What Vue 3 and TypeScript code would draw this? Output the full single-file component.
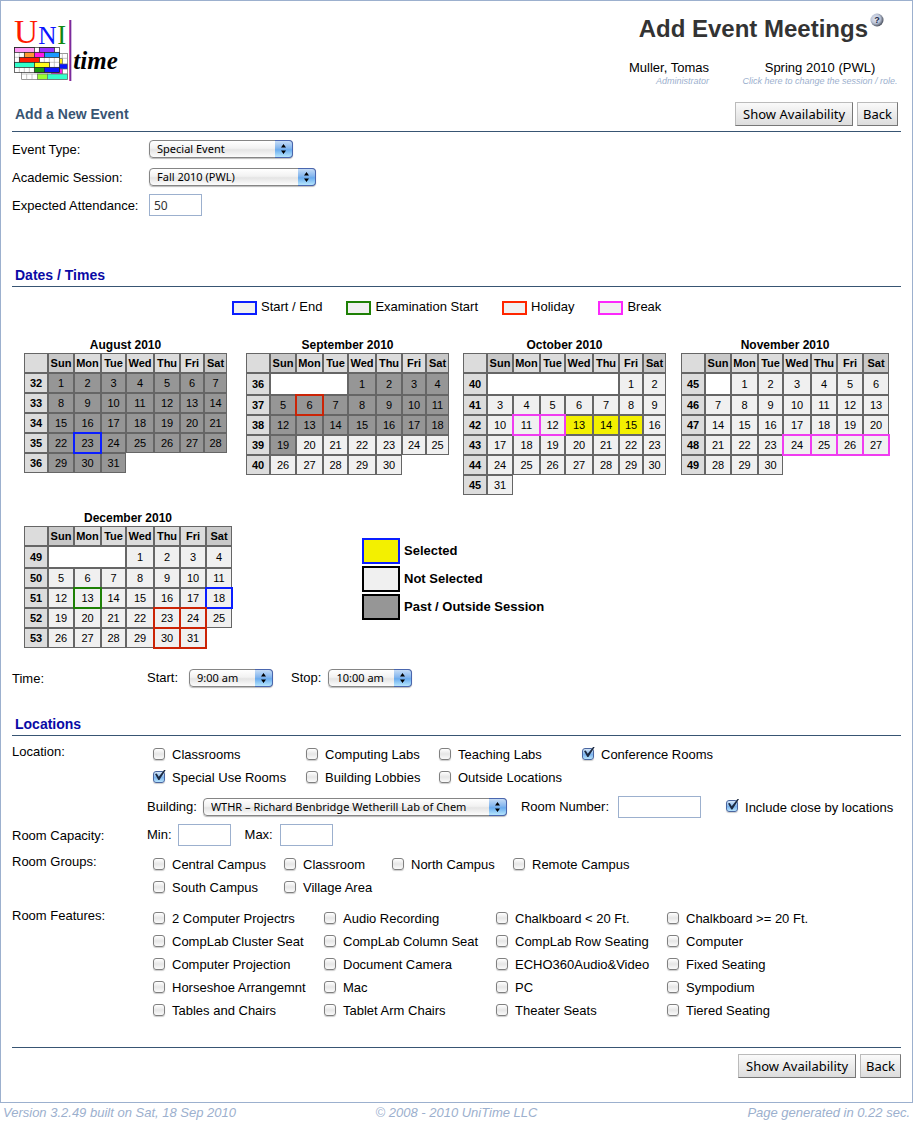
<script setup lang="ts">
import { ref } from 'vue'

type Mark = 'edge' | 'exam' | 'holiday' | 'break'

interface Month {
  name: string
  firstWeek: number
  offset: number
  days: number
  pastUntil: number
  wide: boolean
  marks: Record<number, Mark>
}

interface Day {
  n: number
  past: boolean
  mark: Mark | ''
}

interface Week {
  n: number
  blanks: number
  days: Day[]
}

interface Option {
  name: string
  on: boolean
}

const dayNames = ['Sun', 'Mon', 'Tue', 'Wed', 'Thu', 'Fri', 'Sat']

const months: Month[] = [
  { name: 'August 2010', firstWeek: 32, offset: 0, days: 31, pastUntil: 31, wide: false, marks: { 23: 'edge' } },
  { name: 'September 2010', firstWeek: 36, offset: 3, days: 30, pastUntil: 19, wide: false, marks: { 6: 'holiday' } },
  { name: 'October 2010', firstWeek: 40, offset: 5, days: 31, pastUntil: 0, wide: false, marks: { 11: 'break', 12: 'break' } },
  { name: 'November 2010', firstWeek: 45, offset: 1, days: 30, pastUntil: 0, wide: true, marks: { 24: 'break', 25: 'break', 26: 'break', 27: 'break' } },
  { name: 'December 2010', firstWeek: 49, offset: 3, days: 31, pastUntil: 0, wide: true, marks: { 13: 'exam', 18: 'edge', 23: 'holiday', 24: 'holiday', 30: 'holiday', 31: 'holiday' } },
]

function weeksOf(m: Month): Week[] {
  const weeks: Week[] = []
  let day = 1
  let blanks = m.offset
  let n = m.firstWeek
  while (day <= m.days) {
    const days: Day[] = []
    for (let c = blanks; c < 7 && day <= m.days; c++, day++) {
      days.push({ n: day, past: day <= m.pastUntil, mark: m.marks[day] ?? '' })
    }
    weeks.push({ n, blanks, days })
    blanks = 0
    n++
  }
  return weeks
}

const calendars = months.map((m) => ({ ...m, weeks: weeksOf(m) }))

const selected = ref(new Set(['October 2010-13', 'October 2010-14', 'October 2010-15']))

function toggle(month: string, d: Day) {
  if (d.past) return
  const key = `${month}-${d.n}`
  if (selected.value.has(key)) selected.value.delete(key)
  else selected.value.add(key)
}

const markLegend: { mark: Mark; name: string }[] = [
  { mark: 'edge', name: 'Start / End' },
  { mark: 'exam', name: 'Examination Start' },
  { mark: 'holiday', name: 'Holiday' },
  { mark: 'break', name: 'Break' },
]

function options(names: string[], on: string[] = []): Option[] {
  return names.map((name) => ({ name, on: on.includes(name) }))
}

const locations = ref(options(
  ['Classrooms', 'Computing Labs', 'Teaching Labs', 'Conference Rooms', 'Special Use Rooms', 'Building Lobbies', 'Outside Locations'],
  ['Conference Rooms', 'Special Use Rooms'],
))
const groups = ref(options(['Central Campus', 'Classroom', 'North Campus', 'Remote Campus', 'South Campus', 'Village Area']))
const features = ref(options([
  '2 Computer Projectrs', 'Audio Recording', 'Chalkboard < 20 Ft.', 'Chalkboard >= 20 Ft.',
  'CompLab Cluster Seat', 'CompLab Column Seat', 'CompLab Row Seating', 'Computer',
  'Computer Projection', 'Document Camera', 'ECHO360Audio&Video', 'Fixed Seating',
  'Horseshoe Arrangemnt', 'Mac', 'PC', 'Sympodium',
  'Tables and Chairs', 'Tablet Arm Chairs', 'Theater Seats', 'Tiered Seating',
]))

const attendance = ref('50')
const roomNumber = ref('')
const minCapacity = ref('')
const maxCapacity = ref('')
const closeBy = ref(true)

const gridX = [28, 43, 58, 73, 88, 103, 118, 133]
const gridY = [112, 127, 142, 157]
const bricks = [
  { x: 13, y: 97, w: 60, c: '#ff99f5' },
  { x: 88, y: 97, w: 45, c: '#9933ff' },
  { x: 43, y: 112, w: 30, c: '#ff9933' },
  { x: 73, y: 112, w: 30, c: '#ff1ae6' },
  { x: 103, y: 112, w: 45, c: '#1a99ff' },
  { x: 28, y: 127, w: 60, c: '#ff1a00' },
  { x: 13, y: 142, w: 60, c: '#33ffcc' },
  { x: 73, y: 142, w: 45, c: '#ffff1a' },
  { x: 73, y: 157, w: 30, c: '#1a9910' },
  { x: 103, y: 157, w: 45, c: '#0a14ff' },
]
</script>

<template>
  <div class="page">
    <main class="frame">
      <header class="top">
        <svg class="logo" viewBox="0 0 336 240" role="img" aria-label="UniTime">
          <g transform="translate(0 30)">
            <text x="12" y="85" font-size="100" fill="#ff1a00">U</text>
            <text x="85" y="86" font-size="76" fill="#0a14ff">N</text>
            <text x="142" y="86" font-size="80" fill="#118811">I</text>
            <g stroke="#666" stroke-width="2">
              <rect x="35" y="115" width="137" height="78" fill="#fff" />
              <path d="M50 177V193M66 177V193M157 115V193M35 177H172M148 130H172" stroke="#aaa" />
              <rect x="146" y="131" width="11" height="16" fill="#ffee1a" />
              <rect x="146" y="147" width="26" height="15" fill="#0a14ff" />
              <rect x="125" y="162" width="32" height="15" fill="#ff1ae6" />
              <rect x="82" y="177" width="30" height="16" fill="#99ff33" />
              <rect x="112" y="177" width="60" height="16" fill="#33ffcc" />
            </g>
            <rect x="13" y="97" width="135" height="75" fill="#fff" />
            <g stroke="#aaa" stroke-width="2">
              <line v-for="x in gridX" :key="'x' + x" :x1="x" :x2="x" y1="97" y2="172" />
              <line v-for="y in gridY" :key="'y' + y" :y1="y" :y2="y" x1="13" x2="148" />
            </g>
            <g stroke="#222" stroke-width="2">
              <rect v-for="(b, i) in bricks" :key="i" :x="b.x" :y="b.y" :width="b.w" height="15" :fill="b.c" />
              <rect x="13" y="97" width="135" height="75" fill="none" />
            </g>
            <rect x="177" y="15" width="3" height="183" fill="#d050a8" />
            <rect x="180" y="15" width="4" height="183" fill="#7a2a9c" />
            <text class="logo-time" x="190" y="163" font-size="75" fill="#000">time</text>
          </g>
        </svg>
        <div class="who">
          <h1>
            Add Event Meetings
            <a href="#help" class="help" aria-label="Help">
              <svg viewBox="0 0 14 14">
                <defs>
                  <radialGradient id="ball" cx="0.4" cy="0.4" r="0.65">
                    <stop offset="0" stop-color="#e4e8f2" />
                    <stop offset="0.55" stop-color="#bcc5d8" />
                    <stop offset="1" stop-color="#3a3f4c" />
                  </radialGradient>
                </defs>
                <circle cx="7" cy="7" r="6.5" fill="url(#ball)" />
                <text x="7" y="10" font-size="9" text-anchor="middle" fill="#1d2a4a">?</text>
              </svg>
            </a>
          </h1>
          <div class="session">
            <div class="user">
              <div>Muller, Tomas</div>
              <small>Administrator</small>
            </div>
            <a href="#session" class="term">
              <span>Spring 2010 (PWL)</span>
              <small>Click here to change the session / role.</small>
            </a>
          </div>
        </div>
      </header>

      <div class="bar">
        <h2>Add a New Event</h2>
        <div class="actions">
          <button type="button" class="push main">Show Availability</button>
          <button type="button" class="push">Back</button>
        </div>
      </div>

      <section class="basics">
        <div class="row">
          <label class="name" for="type">Event Type:</label>
          <span class="pick pick-type"><select id="type"><option>Special Event</option></select>
            <svg viewBox="0 0 17 16"><path d="M8.5 3l2.5 3.5h-5zM8.5 13l2.5-3.5h-5z" /></svg></span>
        </div>
        <div class="row">
          <label class="name" for="academic">Academic Session:</label>
          <span class="pick pick-session"><select id="academic"><option>Fall 2010 (PWL)</option></select>
            <svg viewBox="0 0 17 16"><path d="M8.5 3l2.5 3.5h-5zM8.5 13l2.5-3.5h-5z" /></svg></span>
        </div>
        <div class="row">
          <label class="name" for="attendance">Expected Attendance:</label>
          <input id="attendance" v-model="attendance" class="box" type="text">
        </div>
      </section>

      <h3>Dates / Times</h3>
      <ul class="marks">
        <li v-for="m in markLegend" :key="m.mark"><i :class="m.mark"></i>{{ m.name }}</li>
      </ul>

      <div class="months">
        <table v-for="c in calendars" :key="c.name" class="month" :class="{ wide: c.wide }">
          <caption>{{ c.name }}</caption>
          <colgroup>
            <col class="c24"><col class="c26"><col class="c27"><col class="c25"><col class="c28"><col class="c26">
            <col class="fri"><col class="sat">
          </colgroup>
          <thead>
            <tr>
              <th></th>
              <th v-for="d in dayNames" :key="d" scope="col" :class="{ weekend: d[0] === 'S' }">{{ d }}</th>
            </tr>
          </thead>
          <tbody>
            <tr v-for="w in c.weeks" :key="w.n" :class="{ opening: w.blanks > 0 }">
              <th scope="row">{{ w.n }}</th>
              <td v-if="w.blanks" class="blank" :colspan="w.blanks"></td>
              <td
                v-for="d in w.days" :key="d.n"
                :class="[d.mark, { past: d.past, selected: selected.has(c.name + '-' + d.n) }]"
              >
                <button type="button" @click="toggle(c.name, d)">{{ d.n }}</button>
              </td>
            </tr>
          </tbody>
        </table>
        <ul class="states">
          <li><i class="is-selected"></i>Selected</li>
          <li><i></i>Not Selected</li>
          <li><i class="is-past"></i>Past / Outside Session</li>
        </ul>
      </div>

      <div class="row time">
        <span class="name">Time:</span>
        <div class="fields">
          <label for="start">Start:</label>
          <span class="pick pick-start"><select id="start"><option>9:00 am</option></select>
            <svg viewBox="0 0 17 16"><path d="M8.5 3l2.5 3.5h-5zM8.5 13l2.5-3.5h-5z" /></svg></span>
          <label for="stop">Stop:</label>
          <span class="pick pick-stop"><select id="stop"><option>10:00 am</option></select>
            <svg viewBox="0 0 17 16"><path d="M8.5 3l2.5 3.5h-5zM8.5 13l2.5-3.5h-5z" /></svg></span>
        </div>
      </div>

      <h3>Locations</h3>
      <div class="row group location">
        <span class="name">Location:</span>
        <div class="checks kinds">
          <label v-for="o in locations" :key="o.name"><input v-model="o.on" type="checkbox">{{ o.name }}</label>
        </div>
      </div>
      <div class="row building">
        <span class="name"></span>
        <div class="fields">
          <label for="building">Building:</label>
          <span class="pick pick-building"><select id="building"><option>WTHR – Richard Benbridge Wetherill Lab of Chem</option></select>
            <svg viewBox="0 0 17 16"><path d="M8.5 3l2.5 3.5h-5zM8.5 13l2.5-3.5h-5z" /></svg></span>
          <label for="number">Room Number:</label>
          <input id="number" v-model="roomNumber" class="box box-wide" type="text">
          <label class="near"><input v-model="closeBy" type="checkbox">Include close by locations</label>
        </div>
      </div>
      <div class="row">
        <span class="name">Room Capacity:</span>
        <div class="fields">
          <label for="min">Min:</label>
          <input id="min" v-model="minCapacity" class="box box-min" type="text">
          <label for="max">Max:</label>
          <input id="max" v-model="maxCapacity" class="box box-max" type="text">
        </div>
      </div>
      <div class="row group groups">
        <span class="name">Room Groups:</span>
        <div class="checks campus">
          <label v-for="o in groups" :key="o.name"><input v-model="o.on" type="checkbox">{{ o.name }}</label>
        </div>
      </div>
      <div class="row group features">
        <span class="name">Room Features:</span>
        <div class="checks gear">
          <label v-for="o in features" :key="o.name"><input v-model="o.on" type="checkbox">{{ o.name }}</label>
        </div>
      </div>

      <div class="closing">
        <button type="button" class="push main">Show Availability</button>
        <button type="button" class="push">Back</button>
      </div>
    </main>
    <footer class="foot">
      <span>Version 3.2.49 built on Sat, 18 Sep 2010</span>
      <span>© 2008 - 2010 UniTime LLC</span>
      <span>Page generated in 0.22 sec.</span>
    </footer>
  </div>
</template>

<style>
body {
  margin: 0;
  background: #fff;
}
</style>

<style scoped>
.page {
  font-family: "Liberation Sans", Arial, sans-serif;
  font-size: 13px;
  line-height: 16px;
  color: #000;
}
.page *,
.page *::before,
.page *::after {
  box-sizing: border-box;
}
h1, h2, h3, ul {
  margin: 0;
  padding: 0;
}
ul {
  list-style: none;
}
button, input, select {
  margin: 0;
  font-family: "Noto Sans", "Open Sans", sans-serif;
}
.frame {
  border: 1px solid #9cb0ce;
  padding: 0 11px;
}

/* header */
.top {
  display: flex;
  justify-content: space-between;
  height: 96px;
}
.logo {
  width: 112px;
  height: 80px;
  margin: 4px 0 0 -2px;
  font-family: "Liberation Serif", serif;
}
.logo-time {
  font-style: italic;
  font-weight: bold;
}
.who {
  display: flex;
  flex-direction: column;
  align-items: flex-end;
}
h1 {
  display: flex;
  gap: 2px;
  margin: 12px 17px 0 0;
  font-size: 24px;
  line-height: 32px;
  color: #333;
}
.help svg {
  display: block;
  width: 14px;
  height: 14px;
  font-family: "Liberation Sans", sans-serif;
  font-weight: bold;
}
.session {
  display: flex;
  gap: 30px;
  margin-top: 15px;
}
.session small {
  display: block;
  font-size: 9px;
  line-height: 10px;
  font-style: italic;
  color: #9cb0ce;
}
.user {
  text-align: right;
}
.term {
  min-width: 162px;
  color: #000;
  text-align: center;
  text-decoration: none;
}

/* section bars */
.bar {
  display: flex;
  align-items: center;
  justify-content: space-between;
  padding: 5px 3px;
  border-bottom: 1px solid #385573;
}
h2 {
  font-size: 14px;
  line-height: 24px;
  color: #385573;
}
h3 {
  padding: 0 3px;
  border-bottom: 1px solid #385573;
  font-size: 14px;
  line-height: 22px;
  color: #0a0aa5;
}
.actions,
.closing {
  display: flex;
  gap: 4px;
}
.push {
  height: 24px;
  padding: 0 5px;
  border: 1px solid;
  border-color: #bbb #777 #777 #bbb;
  background: linear-gradient(#fafafa, #ddd);
  font-size: 13px;
  line-height: 20px;
  color: #000;
}
.push.main {
  padding: 0 7px;
}

/* form rows */
.basics {
  padding: 3px 0 45px;
}
.row {
  display: flex;
  align-items: center;
  min-height: 28px;
}
.name {
  flex: none;
  width: 135px;
  padding-top: 1px;
}
.basics .name {
  width: 137px;
}
.fields {
  display: flex;
  align-items: center;
  flex: 1;
}
.pick {
  position: relative;
  display: block;
  height: 18px;
}
.pick select {
  display: block;
  width: 100%;
  height: 18px;
  padding: 0 20px 0 7px;
  appearance: none;
  border: 1px solid #858585;
  border-radius: 4px;
  background: linear-gradient(#fff 0%, #f2f2f2 45%, #e4e4e4 55%, #fcfcfc 100%);
  box-shadow: 0 1px 1px #bbb;
  font-size: 11px;
  line-height: 16px;
  color: #000;
}
.pick svg {
  position: absolute;
  top: 0;
  right: 0;
  width: 18px;
  height: 18px;
  border: 1px solid #4a66ae;
  border-left: 0;
  border-radius: 0 4px 4px 0;
  background: linear-gradient(#c5dcf6 0%, #84b6ee 45%, #69abee 55%, #b6e6fd 100%);
  pointer-events: none;
}
.pick-type { width: 144px; }
.pick-session { width: 167px; }
.pick-start { width: 84px; margin: 0 18px 0 11px; }
.pick-stop { width: 84px; margin-left: 7px; }
.pick-building { width: 304px; margin: 0 14px 0 6px; }
.box {
  width: 53px;
  height: 22px;
  padding: 0 4px;
  border: 1px solid #9cb0ce;
  background: #fff;
  font-size: 12px;
  color: #333;
}
.box-wide { width: 83px; margin: 0 25px 0 9px; }
.box-min { margin: 0 14px 0 6px; }
.box-max { margin-left: 7px; }

/* legend of day marks */
.marks {
  display: flex;
  gap: 24px;
  margin: 10px 0 21px 220px;
  line-height: 20px;
}
.marks li {
  display: flex;
  align-items: center;
  gap: 4px;
}
.marks i {
  width: 25px;
  height: 14px;
  margin-top: 2px;
  border: 2px solid;
  background: #f0f0f0;
}
.marks .edge { border-color: #0a1eff; }
.marks .exam { border-color: #1e8005; }
.marks .holiday { border-color: #ff2600; }
.marks .break { border-color: #fc28fc; }

/* calendars */
.months {
  display: grid;
  grid-template-columns: 222px 217px 218px auto;
  row-gap: 16px;
  align-items: start;
  justify-items: start;
  margin-left: 12px;
}
.month {
  table-layout: fixed;
  width: 203px;
  border-spacing: 0;
}
.month.wide { width: 208px; }
.c24 { width: 24px; }
.c25 { width: 25px; }
.c26 { width: 26px; }
.c27 { width: 27px; }
.c28 { width: 28px; }
.fri { width: 24px; }
.sat { width: 23px; }
.wide .fri, .wide .sat { width: 26px; }
caption {
  font-size: 12px;
  line-height: 15px;
  font-weight: bold;
}
.month th,
.month td {
  height: 20px;
  padding: 0;
  border: 1px solid #666;
  font-size: 11px;
  line-height: 18px;
  text-align: center;
}
.month th {
  background: #dcdcdc;
  white-space: nowrap;
}
.month th.weekend { background: #c8c8c8; }
.opening th,
.opening td { height: 22px; }
.month td { background: #f0f0f0; }
.month td.blank { background: #fff; }
.month td.past { background: #969696; }
.month td.selected { background: #f3f000; }
.month td button {
  display: block;
  width: 100%;
  padding: 0;
  border: 0;
  background: none;
  font: 11px/18px "Liberation Sans", Arial, sans-serif;
  color: #000;
}
.month td.edge,
.month td.exam,
.month td.holiday,
.month td.break {
  position: relative;
  z-index: 1;
}
.month td.edge { border-color: #0a1eff; box-shadow: 0 0 0 1px #0a1eff; }
.month td.exam { border-color: #1e8005; box-shadow: 0 0 0 1px #1e8005; }
.month td.holiday { border-color: #cb2406; box-shadow: 0 0 0 1px #cb2406; }
.month td.break { border-color: #f03cf0; box-shadow: 0 0 0 1px #f03cf0; }
.states {
  grid-column: 2 / 5;
  display: grid;
  gap: 2px;
  margin: 27px 0 0 116px;
  font-weight: bold;
}
.states li {
  display: flex;
  align-items: center;
  gap: 4px;
}
.states i {
  width: 38px;
  height: 26px;
  border: 2px solid #000;
  background: #f0f0f0;
}
.states .is-selected {
  border-color: #0a1eff;
  background: #f3f000;
}
.states .is-past { background: #969696; }

.time {
  margin: 16px 0 21px;
}

/* check lists */
.group {
  align-items: flex-start;
}
.location { padding-top: 7px; }
.building { margin-top: 4px; }
.groups { padding-top: 4px; }
.features { padding-top: 8px; }
.checks {
  display: grid;
  flex: 1;
  padding-left: 6px;
}
.kinds { grid-template-columns: 153px 133px 143px auto; }
.campus { grid-template-columns: 131px 108px 121px auto; }
.gear { grid-template-columns: 171px 172px 171px auto; }
.checks label,
.near {
  display: flex;
  align-items: center;
  gap: 7px;
  line-height: 23px;
  white-space: nowrap;
}
input[type="checkbox"] {
  position: relative;
  flex: none;
  width: 12px;
  height: 12px;
  margin-bottom: 2px;
  appearance: none;
  border: 1px solid #808080;
  border-radius: 3px;
  background: linear-gradient(#fff, #e6e6e6 50%, #fafafa);
  box-shadow: 0 1px 1px #ccc;
}
input[type="checkbox"]:checked {
  border-color: #4a66a0;
  background: linear-gradient(#d5e6f8, #7db4ee 55%, #b5e3fc);
}
input[type="checkbox"]:checked::after {
  content: "";
  position: absolute;
  top: -2px;
  left: 1px;
  width: 11px;
  height: 11px;
  background: #1c2a42;
  clip-path: polygon(0 42%, 16% 36%, 34% 66%, 86% 0, 100% 0, 40% 96%, 30% 96%);
}

.closing {
  justify-content: flex-end;
  margin-top: 25px;
  padding: 6px 0 24px;
  border-top: 1px solid #385573;
}
.foot {
  display: grid;
  grid-template-columns: 1fr auto 1fr;
  padding: 0 3px;
  font-style: italic;
  line-height: 20px;
  color: #9cb0ce;
}
.foot span:last-child {
  text-align: right;
}
</style>
